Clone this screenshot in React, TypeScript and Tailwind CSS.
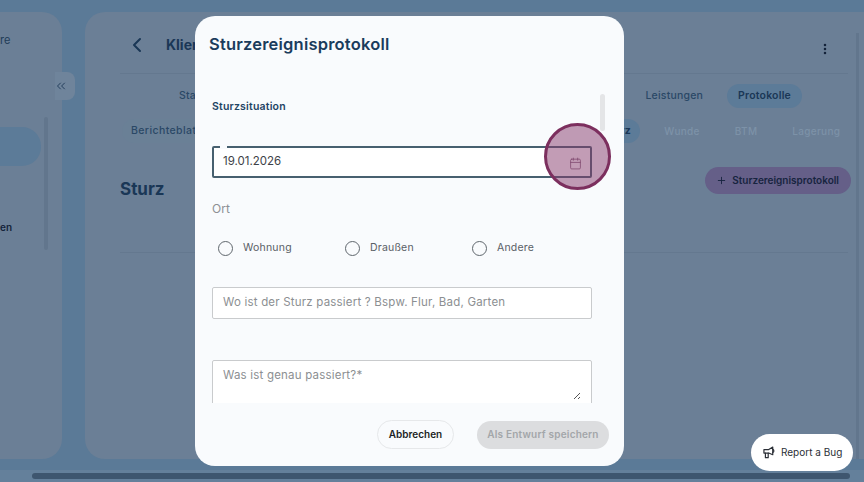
import { Calendar, ChevronLeft, ChevronsLeft, EllipsisVertical, Plus } from "lucide-react";

const font = { fontFamily: "Inter, 'Noto Sans', sans-serif" };

function Radio({ label, w }: { label: string; w: string }) {
  return (
    <label className={`flex items-center gap-[10px] ${w}`}>
      <span className="size-[15px] rounded-full border-[1.5px] border-[#5f666c]" />
      <span className="text-[10.5px] tracking-[0.2px] text-[#5a6066]">{label}</span>
    </label>
  );
}

export default function App() {
  return (
    <div style={font} className="relative h-[482px] w-[864px] overflow-hidden bg-[#5b7a97]">
      <div className="flex h-[459px] gap-[23px] pt-[12px]">
        <aside className="relative flex w-[62px] shrink-0 flex-col items-end rounded-r-[20px] bg-[#6b7f96]">
          <div className="flex h-full w-full flex-col">
            <span className="mt-[21px] text-[11px] leading-[14px] text-[#1f3c58]">re</span>
            <div className="mt-[80px] h-[39px] w-[41px] rounded-r-[19px] bg-[#5c7b98]" />
            <span className="mt-[54px] text-[10px] font-semibold leading-[14px] text-[#14233a]">en</span>
          </div>
          <span className="absolute right-[14px] top-[105px] h-[133px] w-[4px] rounded bg-[#62768d]" />
          <span className="absolute -right-[13px] top-[60px] flex h-[28px] w-[20px] items-center justify-center rounded-r-[8px] bg-[#6f849b] text-[#1e3957]">
            <ChevronsLeft size={14} strokeWidth={1.6} className="-ml-[9px]" />
          </span>
        </aside>

        <main className="relative min-w-0 flex-1 rounded-l-[20px] bg-[#6b7f96] pl-[35px] pr-[16px]">
          <div className="flex h-[62px] items-center border-b border-[#64788f] pt-[4px]">
            <ChevronLeft size={24} strokeWidth={2} className="ml-[5px] mr-[17px] text-[#1a3756]" />
            <span className="text-[14px] font-bold text-[#1a3756]">Klient</span>
            <EllipsisVertical size={14} strokeWidth={2.4} className="ml-auto mr-[16px] mt-[8px] text-[#14233a]" />
          </div>
          <div className="mt-[10px] flex h-[24px] items-center text-[10.5px] font-medium tracking-[0.2px]">
            <span className="ml-[59px] text-[#2a4866]">Stammdaten</span>
            <span className="ml-[401px] text-[#2a4866]">Leistungen</span>
            <span className="ml-[24px] flex h-[24px] items-center rounded-full bg-[#5c7b98] px-[11px] font-semibold text-[#1a3756]">Protokolle</span>
          </div>
          <div className="mt-[11px] flex h-[24px] items-center text-[10px] font-medium tracking-[0.3px]">
            <span className="ml-[2px] flex h-[24px] items-center rounded-full bg-[#6a8096] px-[9px] text-[10.5px] tracking-[0.4px] text-[#2a4866]">Berichteblatt</span>
            <span className="ml-[375px] flex h-[24px] items-center rounded-full bg-[#5c7b98] pl-[18px] pr-[9px] text-[10.5px] font-bold text-[#1a3756]">Sturz</span>
            <span className="ml-[24px] text-[#7d92a8]">Wunde</span>
            <span className="ml-[35px] text-[#7d92a8]">BTM</span>
            <span className="ml-[35px] text-[#7d92a8]">Lagerung</span>
          </div>
          <div className="mt-[24px] flex h-[27px] items-center justify-between">
            <span className="mt-[19px] text-[17px] font-bold text-[#1a3756]">Sturz</span>
            <button className="-mr-[3px] flex h-[27px] items-center gap-[5px] rounded-full bg-[#655f88] pl-[11px] pr-[12px] text-[10px] font-semibold text-[#17243f]">
              <Plus size={11} strokeWidth={2} />
              Sturzereignisprotokoll
            </button>
          </div>
          <div className="mt-[58px] h-px bg-[#64788f]" />
          <span className="absolute right-[5px] top-[21px] h-[426px] w-[3px] bg-[#62768d]" />
        </main>
      </div>

      <div className="mt-[11px] h-[12px] bg-[#64809b] pl-[32px] pr-[14px] pt-[3px]">
        <div className="h-[6px] rounded-full bg-[#3e566f]" />
      </div>

      {/* modal */}
      <section className="absolute left-[195px] top-[16px] flex h-[450px] w-[429px] flex-col overflow-hidden rounded-[20px] bg-[#f9fbfd]">
        <h1 className="ml-[14px] mt-[18px] text-[16.5px] font-semibold leading-[20px] tracking-[0.2px] text-[#1a3c5c]">Sturzereignisprotokoll</h1>
        <div className="relative mx-[17px] mt-[32px] h-[317px] overflow-hidden">
          <h2 className="mt-[14px] text-[10.5px] font-semibold leading-[14px] tracking-[0.2px] text-[#1f4464]">Sturzsituation</h2>
          <div className="relative mt-[32px] flex h-[32px] w-[380px] items-center rounded-[2px] border-2 border-[#47606f] bg-white pl-[9px] pr-[8px] text-[11.5px] text-[#3e4247]">
            <span className="absolute -top-[3px] left-[6px] h-[4px] w-[7px] bg-[#f9fbfd]" />
            19.01.2026
            <Calendar size={13} strokeWidth={1.5} className="ml-auto mt-[2px] text-[#7c5a74]" />
          </div>
          <div className="mt-[23px] text-[12px] leading-[16px] text-[#8d9094]">Ort</div>
          <div className="ml-[6px] mt-[23px] flex h-[16px] items-center">
            <Radio label="Wohnung" w="w-[127px]" />
            <Radio label="Draußen" w="w-[127px]" />
            <Radio label="Andere" w="w-[120px]" />
          </div>
          <div className="mt-[31px] flex h-[32px] w-[380px] items-center rounded-[2px] border border-[#c9cbcd] bg-white pl-[10px] text-[11.5px] tracking-[0.2px] text-[#8c8f92]">
            Wo ist der Sturz passiert ? Bspw. Flur, Bad, Garten
          </div>
          <div className="relative mt-[41px] h-[60px] w-[380px] rounded-[2px] border border-[#c9cbcd] bg-white pl-[10px] pt-[6px] text-[11.5px] tracking-[0.2px] text-[#8c8f92]">
            Was ist genau passiert?*
            <svg className="absolute right-[10px] top-[31px]" width="8" height="8" viewBox="0 0 8 8" fill="none" stroke="#555" strokeWidth="1">
              <path d="M1 7 7 1M5 7 7 5" />
            </svg>
          </div>
        </div>
        <footer className="ml-auto mr-[15px] mt-[17px] flex items-center gap-[23px]">
          <button className="h-[29px] w-[77px] rounded-full border border-[#e6e8ea] text-[10px] font-semibold text-[#1c1f24]">Abbrechen</button>
          <button className="h-[28px] w-[132px] rounded-full bg-[#dcdddf] text-[10px] font-semibold tracking-[0.2px] text-[#a3a6a9]">Als Entwurf speichern</button>
        </footer>
        <span className="absolute left-[405px] top-[78px] h-[37px] w-[5px] rounded bg-[#e4e5e7]" />
      </section>

      {/* highlight */}
      <div className="absolute left-[544px] top-[123px] size-[67px] rounded-full border-[3px] border-[#7c2f5e] bg-[#853a6c]/50" />

      {/* report */}
      <button className="absolute left-[751px] top-[434px] flex h-[37px] w-[102px] items-center gap-[5px] rounded-full bg-white pl-[12px] text-[10px] text-[#2b2f36]">
        <svg width="13" height="13" viewBox="0 0 14 14" fill="none" stroke="#2b2f36" strokeWidth="1.3" strokeLinejoin="round" strokeLinecap="round">
          <path d="M1 3.8H6.2L10.5 1.2V9.4L6.2 7.6H1Z" />
          <path d="M2.6 7.6V12.6H5.6V7.6" />
          <path d="M10.5 3.6A1.8 1.8 0 0 1 10.5 7" />
        </svg>
        Report a Bug
      </button>
    </div>
  );
}
